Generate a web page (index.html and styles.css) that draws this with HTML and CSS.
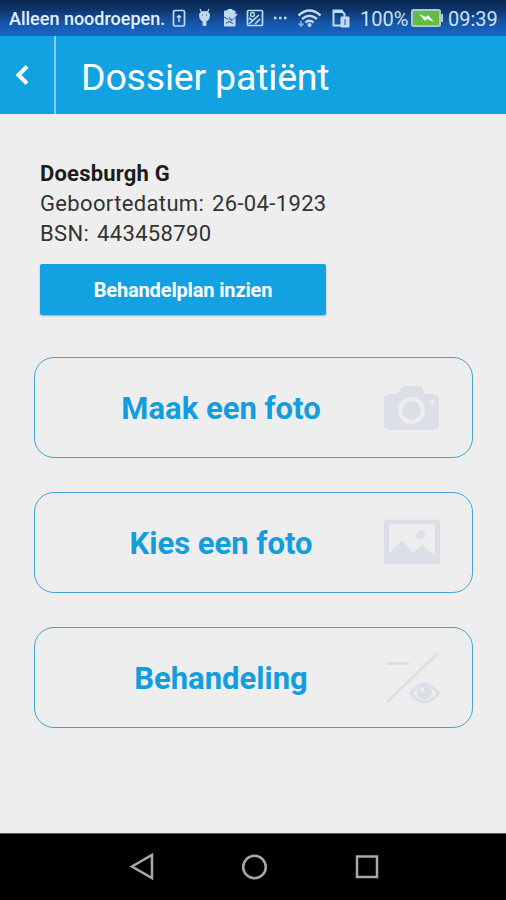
FILE: index.html
```html
<!DOCTYPE html>
<html lang="nl">
<head>
    <meta charset="UTF-8">
    <title>Dossier patiënt</title>
    <link rel="stylesheet" href="styles.css">
</head>
<body>
    <div class="statusbar">
        <span class="provider">Alleen noodroepen.</span>
        <svg class="meldingen" width="192" height="36" viewBox="166 0 192 36" fill="none" stroke="#c3d9f2" stroke-width="1.7">
            <rect x="173.5" y="10.500" width="11" height="15.500" rx="1.500"/>
            <path d="M179 22v-6M177 17.500l2-2 2 2" stroke-width="1.500"/>
            <path d="M199.500 15q0-3.500 5-3.500t5 3.500q0 5.500-3.500 6v4.500h-3V21q-3.500-.5-3.500-6z" fill="#c3d9f2" stroke-width=".8"/>
            <path d="M200 9l1.800 3.500M209 9l-1.800 3.500" stroke-width="1.200"/>
            <path d="M202 15h1M206 15h1" stroke="#1857a2" stroke-width="1.200"/>
            <path d="M224.500 11h2.500l1-1.500h4l1 1.500h2v15h-10.500z" fill="#c3d9f2" stroke-width="1"/>
            <path d="M224 17l4 2.500M226 23.500l3-2 4 2" stroke="#3472b8" stroke-width="1.200"/>
            <path d="M229 17.500l2.500 3 6-6" stroke="#3472b8" stroke-width="1.200"/>
            <path d="M232 19l5-5" stroke-width="1.500"/>
            <rect x="247.500" y="10.500" width="15" height="15" rx="1"/>
            <circle cx="252.500" cy="14.500" r="2" stroke-width="1.300"/>
            <path d="M249 24l10-9M255 24l5-5M249 18l4 3" stroke-width="1.600"/>
            <path d="M274 18h2.500M279 18h2.500M284 18h2.500" stroke-width="2.300"/>
            <path d="M298.500 15.500q11-10 22 0M302 19q7.500-6.500 15 0M305.500 22.500q4-3.500 8 0" stroke-width="2.400"/>
            <circle cx="309.500" cy="25" r="2" fill="#c3d9f2" stroke="none"/>
            <path d="M301 21v5M298.500 23.500l2.500 2.500 2.500-2.500" stroke="#8fb6e3" stroke-width="1.500"/>
            <path d="M341 25.500h-7.500v-15h8l3 3.500v3" stroke-width="2"/>
            <path d="M333 11.500h9" stroke-width="3"/>
            <path d="M341 17h8v10h-8z" fill="#c3d9f2" stroke-width="1"/>
            <path d="M345 19v6" stroke="#2f70bd" stroke-width="1.200"/>
        </svg>
        <span class="procent">100%</span>
        <svg class="batterij" width="32" height="18" viewBox="0 0 32 18">
            <rect x="1" y="1" width="28" height="16" rx="1.500" fill="#62bd45" stroke="#b5c6d2" stroke-width="2"/>
            <path d="M30 5h2v8h-2z" fill="#b5c6d2"/>
            <path d="M8 5l7 3 2-2 6 7-7-3-2 2z" fill="#eef8ec"/>
        </svg>
        <span class="tijd">09:39</span>
    </div>

    <header class="kop">
        <div class="terug">
            <svg width="14" height="22" viewBox="0 0 14 22"><path d="M12 2.500L3.500 11 12 19.500" fill="none" stroke="#fff" stroke-width="4"/></svg>
        </div>
        <h1 class="titel">Dossier patiënt</h1>
    </header>

    <main class="inhoud">
        <div class="patient">
            <div class="naam">Doesburgh G</div>
            <div class="geboren">Geboortedatum: 26-04-1923</div>
            <div class="bsn">BSN: 443458790</div>
            <button type="button" class="plan">Behandelplan inzien</button>
        </div>

        <div class="acties">
            <button type="button" class="actie">
                <span class="label">Maak een foto</span>
                <svg class="icoon" width="56" height="56" viewBox="0 0 56 56">
                    <path d="M5 14h7q3 0 3.500-3l1-3q.8-2 3-2h16q2.200 0 3 2l1 3q.5 3 3.500 3h7q5 0 5 5v26q0 5-5 5H5q-5 0-5-5V19q0-5 5-5z" fill="#dcdfe8"/>
                    <circle cx="27.500" cy="30.500" r="11.500" fill="none" stroke="#eee" stroke-width="4"/>
                    <circle cx="48" cy="22" r="2.300" fill="#eee"/>
                </svg>
            </button>
            <button type="button" class="actie">
                <span class="label">Kies een foto</span>
                <svg class="icoon" width="56" height="56" viewBox="0 0 56 56">
                    <rect x="2.500" y="7" width="51" height="40" fill="none" stroke="#dcdfe8" stroke-width="5"/>
                    <path d="M4 40L18 25l11 13 9-8 14 12v6H4z" fill="#dcdfe8"/>
                    <circle cx="36.500" cy="20" r="4.500" fill="#dcdfe8"/>
                </svg>
            </button>
            <button type="button" class="actie">
                <span class="label">Behandeling</span>
                <svg class="icoon" width="56" height="56" viewBox="0 0 56 56" fill="none" stroke="#dcdfe8" stroke-width="3">
                    <path d="M2 13.500h23M3 52L54 3"/>
                    <path d="M26.500 43q14-18 28 0-14 18-28 0z"/>
                    <circle cx="40.500" cy="42" r="7.500" fill="#dcdfe8" stroke="none"/>
                    <circle cx="38" cy="39.500" r="2.300" fill="#eee" stroke="none"/>
                </svg>
            </button>
        </div>
    </main>

    <nav class="navigatie">
        <svg width="506" height="66" viewBox="0 834 506 66" fill="none" stroke="#a8a8a8" stroke-width="2.500">
            <path d="M152 855v23l-20-11.500z"/>
            <circle cx="254.500" cy="867" r="11.300"/>
            <rect x="357" y="856.500" width="20" height="20.500"/>
        </svg>
    </nav>
</body>
</html>
```

FILE: styles.css
```css
* { margin:0; padding:0; box-sizing:border-box; }
body {
    width:506px;
    height:900px;
    display:flex;
    flex-direction:column;
    background-color:#eee;
    font-family:Roboto, sans-serif;
    overflow:hidden;
}
.statusbar {
    height:36px;
    display:flex;
    align-items:center;
    padding-left:9px;
    background:linear-gradient(#0a2850, #0d3468 25%, #1557a9 65%, #1768c9);
    color:#d0e0f4;
    white-space:nowrap;
}
.provider {
    width:157px;
    font-size:18px;
    font-weight:500;
    color:#e6effa;
}
.meldingen {
    flex:none;
}
.procent {
    width:53px;
    padding:2px 0 0 2px;
    font-size:20px;
}
.batterij {
    flex:none;
}
.tijd {
    padding:2px 0 0 5px;
    font-size:20px;
}
.kop {
    height:78px;
    display:flex;
    background-color:#12a2e2;
    color:#fff;
}
.terug {
    width:56px;
    display:flex;
    align-items:center;
    padding-left:15px;
    border-right:2px solid #84cdf0;
}
.titel {
    padding-left:25px;
    font-size:37.5px;
    font-weight:400;
    letter-spacing:-.2px;
    line-height:82px;
}
.inhoud {
    flex:1;
    padding:45px 33px 0 34px;
}
.patient {
    padding-left:6px;
    font-size:22px;
    line-height:30px;
    letter-spacing:.35px;
    word-spacing:2px;
    color:#333;
}
.naam {
    font-weight:bold;
    letter-spacing:.2px;
    word-spacing:0;
    color:#1c1c1c;
}
.plan {
    display:block;
    width:286px;
    height:51px;
    margin-top:15px;
    padding-top:1px;
    border:none;
    border-radius:2px;
    background-color:#12a2e2;
    box-shadow:0 1px 2px #aaa;
    color:#fff;
    font-family:inherit;
    font-size:20px;
    font-weight:bold;
    letter-spacing:-.15px;
}
.acties {
    display:flex;
    flex-direction:column;
    gap:34px;
    margin-top:42px;
}
.actie {
    height:101px;
    display:flex;
    align-items:center;
    padding-right:32px;
    border:1.500px solid #3fa5da;
    border-radius:20px;
    background:none;
    color:#129ddd;
    font-family:inherit;
    font-size:31px;
    font-weight:bold;
}
.label {
    flex:1;
    padding:2px 0 0 23px;
    text-align:center;
}
.icoon {
    flex:none;
}
.navigatie {
    height:67px;
    background-color:#000;
    border-top:1px solid #555;
}
```
